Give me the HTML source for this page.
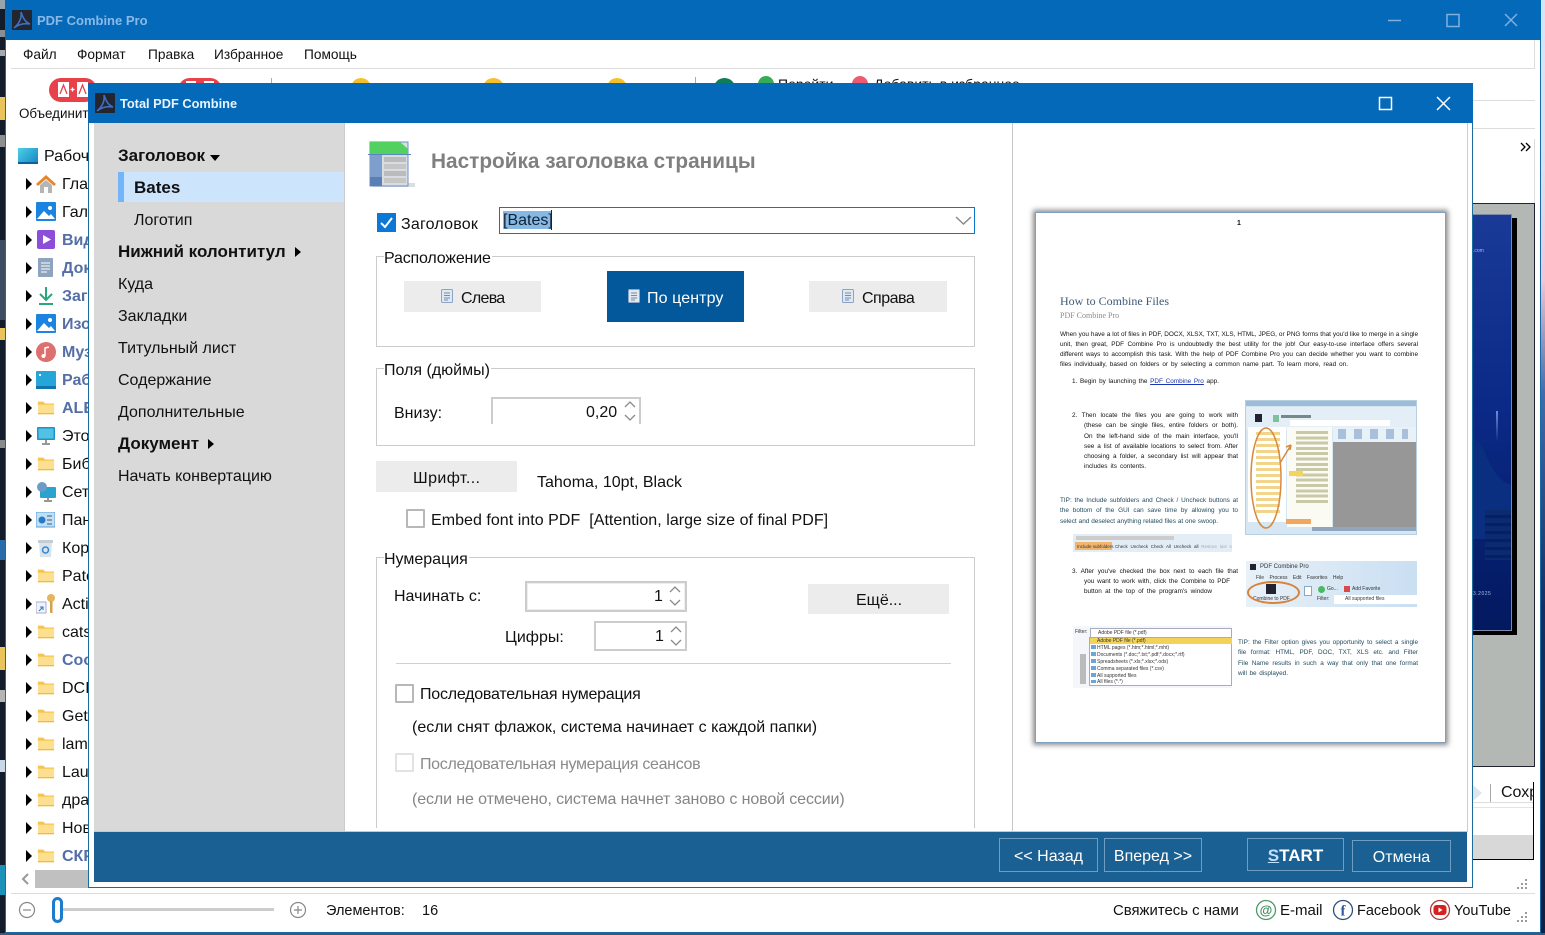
<!DOCTYPE html>
<html><head><meta charset="utf-8"><title>PDF Combine Pro</title>
<style>
html,body{margin:0;padding:0}
body{width:1545px;height:935px;overflow:hidden;position:relative;background:#fff;font-family:"Liberation Sans","DejaVu Sans",sans-serif;font-size:16px;color:#111}
.a{position:absolute;box-sizing:border-box}
.t{position:absolute;white-space:nowrap;line-height:20px;height:20px}
.b{font-weight:bold}
.g{position:absolute;box-sizing:border-box;border:1px solid #ccc}
.btn{position:absolute;background:#ececec;box-sizing:border-box}
.cb{position:absolute;box-sizing:border-box;width:19px;height:19px;border:2px solid #b8b8b8;background:#fff;border-radius:1px}
.fb{position:absolute;box-sizing:border-box;border:1px solid #6f9dc2;color:#fff;text-align:center}
.n{color:#556fa6;font-weight:bold}
.p{position:absolute;margin-top:1px;white-space:nowrap;font-size:6.4px;line-height:8px;height:8px;color:#111;text-align:justify;text-align-last:justify;overflow:hidden}
.s{position:absolute;white-space:nowrap;color:#333;line-height:7px;height:7px}
</style></head><body>
<svg width="0" height="0" style="position:absolute">
<symbol id="fo" viewBox="0 0 20 16"><path d="M1 1.500h6l2 2h10v12H1z" fill="#fde08f"/><path d="M1 1.500h6l2 2h10v1.500H1z" fill="#f5c552"/><path d="M1 14.300h18v1.200H1z" fill="#eab545"/></symbol>
<symbol id="ar" viewBox="0 0 8 12"><path d="M1 0l6 6-6 6z" fill="#000"/></symbol>
<symbol id="lg" viewBox="0 0 20 20"><rect width="20" height="20" rx="1" fill="#23262f"/><path d="M2 18C7 14 10 8 9 2c2 6 4 10 9 12C12 13 7 14 2 18z" fill="none" stroke="#3e6fc4" stroke-width="1.600"/></symbol>
<symbol id="dc" viewBox="0 0 12 14"><rect x=".5" y=".5" width="11" height="13" rx="1" fill="#dfe9f5" stroke="#8aa6c4"/><path d="M3 4h6M3 6.500h6M3 9h6M3 11h4" stroke="#7d8b9b"/></symbol>
</svg>

<!-- desktop edges -->
<div class="a" style="left:0;top:0;width:5px;height:935px;background:#131c2a"></div>
<div class="a" style="left:0;top:0;width:5px;height:9px;background:#9aa3ab"></div>
<div class="a" style="left:0;top:30px;width:5px;height:7px;background:#8a8f96"></div>
<div class="a" style="left:0;top:50px;width:5px;height:6px;background:#a5a8ac"></div>
<div class="a" style="left:0;top:97px;width:5px;height:23px;background:#eac35a"></div>
<div class="a" style="left:0;top:135px;width:5px;height:12px;background:#8f8f8f"></div>
<div class="a" style="left:0;top:240px;width:5px;height:80px;background:#3d4c60"></div>
<div class="a" style="left:0;top:328px;width:5px;height:12px;background:#eac35a"></div>
<div class="a" style="left:0;top:440px;width:5px;height:8px;background:#8a8a8a"></div>
<div class="a" style="left:0;top:540px;width:5px;height:20px;background:#2a6ca8"></div>
<div class="a" style="left:0;top:647px;width:5px;height:23px;background:#eac35a"></div>
<div class="a" style="left:0;top:690px;width:5px;height:12px;background:#b5b5b5"></div>
<div class="a" style="left:0;top:760px;width:5px;height:12px;background:#c9d8e8"></div>
<div class="a" style="left:0;top:865px;width:5px;height:30px;background:#1c92b8"></div>
<div class="a" style="left:1541px;top:0;width:4px;height:935px;background:linear-gradient(#d2e6f8 0,#dbe0f2 18%,#efc6d8 30%,#3f6ea8 42%,#12305f 65%,#0d2143 100%)"></div>
<div class="a" style="left:0;top:933px;width:1545px;height:2px;background:#3a5a78"></div>

<!-- main window -->
<div class="a" style="left:5px;top:0;width:1536px;height:933px;background:#fff;border:1px solid #1a6aa8;overflow:hidden"></div>
<div class="a" style="left:5px;top:0;width:1536px;height:40px;background:#0569b9"></div>
<svg class="a" style="left:12px;top:10px" width="20" height="20"><use href="#lg"/></svg>
<div class="t b" style="left:37px;top:11px;font-size:13px;color:#8ab9e6">PDF Combine Pro</div>
<svg class="a" style="left:1380px;top:10px" width="150" height="22" fill="none" stroke="#7fb0de" stroke-width="1.500"><path d="M8 10.500h13"/><rect x="67" y="4.500" width="12" height="12"/><path d="M125 4l12 12M137 4l-12 12"/></svg>

<div class="t" style="left:23px;top:45px;font-size:13.700px">Файл</div>
<div class="t" style="left:77px;top:45px;font-size:13.700px">Формат</div>
<div class="t" style="left:148px;top:45px;font-size:13.700px">Правка</div>
<div class="t" style="left:214px;top:45px;font-size:13.700px">Избранное</div>
<div class="t" style="left:304px;top:45px;font-size:13.700px">Помощь</div>
<div class="a" style="left:11px;top:68px;width:1524px;height:1px;background:#ddd"></div>
<div class="a" style="left:1534px;top:40px;width:1px;height:29px;background:#ddd"></div>

<!-- toolbar -->
<div class="a" style="left:49px;top:78px;width:48px;height:24px;border-radius:12px;background:#e8414a"></div>
<div class="a" style="left:58px;top:82px;width:11px;height:15px;background:#fff"></div>
<div class="a" style="left:77px;top:82px;width:11px;height:15px;background:#fff"></div>
<svg class="a" style="left:58px;top:82px" width="30" height="15" fill="none" stroke="#e8414a" stroke-width="1.300"><path d="M2 12L5.500 3 9 12M21 12l3.500-9 3.500 9"/><path d="M12.500 7.500h4M14.500 5.500v4" stroke="#fff"/></svg>
<div class="a" style="left:178px;top:78px;width:44px;height:24px;border-radius:12px;background:#e8414a"></div>
<div class="a" style="left:186px;top:81px;width:10px;height:3px;background:#fff"></div>
<div class="a" style="left:204px;top:81px;width:10px;height:3px;background:#fff"></div>
<div class="t" style="left:19px;top:104px;font-size:13.400px">Объединить</div>
<div class="a" style="left:271px;top:78px;width:1px;height:8px;background:#aaa"></div>
<div class="a" style="left:351px;top:78px;width:20px;height:20px;border-radius:50%;background:#f6c02c"></div>
<div class="a" style="left:483px;top:78px;width:21px;height:20px;border-radius:50%;background:#f6c02c"></div>
<div class="a" style="left:607px;top:78px;width:20px;height:20px;border-radius:50%;background:#f6c02c"></div>
<div class="a" style="left:695px;top:77px;width:1px;height:8px;background:#aaa"></div>
<div class="a" style="left:714px;top:78px;width:21px;height:20px;border-radius:50%;background:#0d7d56"></div>
<div class="a" style="left:758px;top:76px;width:16px;height:16px;border-radius:50%;background:#36ad55"></div>
<div class="t" style="left:778px;top:74px;font-size:14px">Перейти</div>
<div class="a" style="left:852px;top:76px;width:16px;height:16px;border-radius:50%;background:#ee5a70"></div>
<div class="t" style="left:874px;top:74px;font-size:14px">Добавить в избранное</div>

<!-- tree -->
<div class="a" style="left:18px;top:148px;width:20px;height:16px;background:linear-gradient(135deg,#4fd0e4,#1788c8);border-bottom:2px solid #0f5f98"></div>
<div class="t" style="left:44px;top:147px">Рабочий стол</div>

<svg class="a" style="left:25px;top:178px" width="8" height="692">
<use href="#ar" y="0" width="8" height="12"/><use href="#ar" y="28" width="8" height="12"/><use href="#ar" y="56" width="8" height="12"/><use href="#ar" y="84" width="8" height="12"/><use href="#ar" y="112" width="8" height="12"/><use href="#ar" y="140" width="8" height="12"/><use href="#ar" y="168" width="8" height="12"/><use href="#ar" y="196" width="8" height="12"/><use href="#ar" y="224" width="8" height="12"/><use href="#ar" y="252" width="8" height="12"/><use href="#ar" y="280" width="8" height="12"/><use href="#ar" y="308" width="8" height="12"/><use href="#ar" y="336" width="8" height="12"/><use href="#ar" y="364" width="8" height="12"/><use href="#ar" y="392" width="8" height="12"/><use href="#ar" y="420" width="8" height="12"/><use href="#ar" y="448" width="8" height="12"/><use href="#ar" y="476" width="8" height="12"/><use href="#ar" y="504" width="8" height="12"/><use href="#ar" y="532" width="8" height="12"/><use href="#ar" y="560" width="8" height="12"/><use href="#ar" y="588" width="8" height="12"/><use href="#ar" y="616" width="8" height="12"/><use href="#ar" y="644" width="8" height="12"/><use href="#ar" y="672" width="8" height="12"/>
</svg>
<!-- icons -->
<svg class="a" style="left:35px;top:174px" width="22" height="20"><path d="M11 1L1 10l2 2 8-7 8 7 2-2z" fill="#e8862e"/><path d="M5 11l6-5 6 5v8H5z" fill="#b5b5b5"/><rect x="9" y="13" width="4" height="6" fill="#fff"/></svg>
<svg class="a" style="left:36px;top:202px" width="20" height="20"><rect width="20" height="19" rx="1" fill="#1a84e0"/><path d="M1 17l7-8 5 5 2-2 4 5z" fill="#fff"/><circle cx="14" cy="6" r="2" fill="#fff"/></svg>
<svg class="a" style="left:37px;top:230px" width="18" height="19"><rect width="18" height="19" rx="2" fill="#8c4ed8"/><path d="M6 5l8 4.500-8 4.500z" fill="#fff"/></svg>
<svg class="a" style="left:38px;top:258px" width="15" height="19"><rect width="15" height="19" rx="1" fill="#8ea3bd"/><path d="M3 5h9M3 8h9M3 11h9M3 14h6" stroke="#fff"/></svg>
<svg class="a" style="left:38px;top:286px" width="16" height="20" fill="none" stroke="#2aa57c" stroke-width="2"><path d="M8 1v12M2 8l6 6 6-6M1 18h14"/></svg>
<svg class="a" style="left:36px;top:314px" width="20" height="20"><rect width="20" height="19" rx="1" fill="#1a84e0"/><path d="M1 17l7-8 5 5 2-2 4 5z" fill="#fff"/><circle cx="14" cy="6" r="2" fill="#fff"/></svg>
<svg class="a" style="left:36px;top:342px" width="20" height="20"><circle cx="10" cy="10" r="10" fill="#dd6f6f"/><path d="M9 14V6l4-1" stroke="#fff" stroke-width="1.500" fill="none"/><circle cx="7.500" cy="14" r="2" fill="#fff"/></svg>
<svg class="a" style="left:36px;top:371px" width="20" height="18"><rect width="20" height="18" rx="1" fill="#25a5d8"/><rect y="15" width="20" height="3" fill="#0f74ad"/><rect x="3" y="3" width="2" height="2" fill="#fff"/></svg>
<svg class="a" style="left:37px;top:400px" width="18" height="15"><use href="#fo"/></svg>
<svg class="a" style="left:37px;top:427px" width="18" height="18"><rect width="18" height="13" rx="1" fill="#1d94c8"/><rect x="1.500" y="1.500" width="15" height="10" fill="#53c1e4"/><path d="M9 13v3M5 17h8" stroke="#777" stroke-width="1.500"/></svg>
<svg class="a" style="left:37px;top:456px" width="18" height="15"><use href="#fo"/></svg>
<svg class="a" style="left:36px;top:482px" width="20" height="20"><rect x="4" y="5" width="16" height="11" rx="1" fill="#2aa3cf"/><circle cx="6" cy="5" r="5" fill="#6c9bc8"/><path d="M12 16v2M8 19h8" stroke="#777" stroke-width="1.500"/></svg>
<svg class="a" style="left:36px;top:512px" width="19" height="16"><rect width="19" height="15" fill="#bfe0f6" stroke="#5aa0d8"/><circle cx="6" cy="8" r="3.500" fill="#2a78c8"/><path d="M11 4h5M11 8h5M11 12h5" stroke="#555"/></svg>
<svg class="a" style="left:38px;top:539px" width="15" height="18"><path d="M1 3h13l-1 15H2z" fill="#dbe3ea"/><rect y="1" width="15" height="3" fill="#c5ccd4"/><circle cx="7.500" cy="11" r="3" fill="none" stroke="#2a8ad8" stroke-width="1.500"/></svg>
<svg class="a" style="left:37px;top:568px" width="18" height="15"><use href="#fo"/></svg>
<svg class="a" style="left:36px;top:593px" width="20" height="21"><rect y="9" width="10" height="11" fill="#f0f4fa" stroke="#aac"/><path d="M3 18l4-4M4 14h3v3" stroke="#1a7ad8" fill="none"/><circle cx="15" cy="5" r="4" fill="#e3b65e"/><rect x="14" y="8" width="2.500" height="12" fill="#d2a24e"/></svg>
<svg class="a" style="left:37px;top:624px" width="18" height="15"><use href="#fo"/></svg>
<svg class="a" style="left:37px;top:652px" width="18" height="15"><use href="#fo"/></svg>
<svg class="a" style="left:37px;top:680px" width="18" height="15"><use href="#fo"/></svg>
<svg class="a" style="left:37px;top:708px" width="18" height="15"><use href="#fo"/></svg>
<svg class="a" style="left:37px;top:736px" width="18" height="15"><use href="#fo"/></svg>
<svg class="a" style="left:37px;top:764px" width="18" height="15"><use href="#fo"/></svg>
<svg class="a" style="left:37px;top:792px" width="18" height="15"><use href="#fo"/></svg>
<svg class="a" style="left:37px;top:820px" width="18" height="15"><use href="#fo"/></svg>
<svg class="a" style="left:37px;top:848px" width="18" height="15"><use href="#fo"/></svg>
<!-- labels -->
<div class="t" style="left:62px;top:175px">Главная</div>
<div class="t" style="left:62px;top:203px">Галерея</div>
<div class="t n" style="left:62px;top:231px">Видео</div>
<div class="t n" style="left:62px;top:259px">Документы</div>
<div class="t n" style="left:62px;top:287px">Загрузки</div>
<div class="t n" style="left:62px;top:315px">Изображения</div>
<div class="t n" style="left:62px;top:343px">Музыка</div>
<div class="t n" style="left:62px;top:371px">Рабочий стол</div>
<div class="t n" style="left:62px;top:399px">ALEX</div>
<div class="t" style="left:62px;top:427px">Этот компьютер</div>
<div class="t" style="left:62px;top:455px">Библиотеки</div>
<div class="t" style="left:62px;top:483px">Сеть</div>
<div class="t" style="left:62px;top:511px">Панель</div>
<div class="t" style="left:62px;top:539px">Корзина</div>
<div class="t" style="left:62px;top:567px">Patch</div>
<div class="t" style="left:62px;top:595px">Activate</div>
<div class="t" style="left:62px;top:623px">cats</div>
<div class="t n" style="left:62px;top:651px">Cool</div>
<div class="t" style="left:62px;top:679px">DCIM</div>
<div class="t" style="left:62px;top:707px">GetW</div>
<div class="t" style="left:62px;top:735px">lam</div>
<div class="t" style="left:62px;top:763px">Lau</div>
<div class="t" style="left:62px;top:791px">драйв</div>
<div class="t" style="left:62px;top:819px">Новая</div>
<div class="t n" style="left:62px;top:847px">СКР</div>
<svg class="a" style="left:20px;top:872px" width="10" height="14" fill="none" stroke="#999" stroke-width="2"><path d="M8 2L3 7l5 5"/></svg>
<div class="a" style="left:35px;top:870px;width:128px;height:18px;background:#c0c0c0"></div>

<!-- right side of main window -->
<div class="a" style="left:1473px;top:100px;width:62px;height:1px;background:#ddd"></div>
<div class="a" style="left:1473px;top:128px;width:62px;height:1px;background:#ddd"></div>
<div class="a" style="left:1534px;top:139px;width:1px;height:64px;background:#ddd"></div>
<svg class="a" style="left:1520px;top:142px" width="12" height="10" fill="none" stroke="#000" stroke-width="1.300"><path d="M1 1l4 4-4 4M6 1l4 4-4 4"/></svg>
<div class="a" style="left:1473px;top:203px;width:62px;height:564px;background:#b3b8b5;border-top:1px solid #223;border-bottom:1px solid #223;border-right:1px solid #223"></div>
<div class="a" style="left:1473px;top:218px;width:44px;height:417px;background:#000"></div>
<div class="a" style="left:1473px;top:214px;width:39px;height:417px;background:linear-gradient(#1a3a98 0,#0b2a88 45%,#03195f 100%);border:1px solid #7e8aa8;border-left:0;overflow:hidden">
  <svg class="a" style="left:0;top:224px" width="38" height="100"><path d="M0 0C14 2 14 38 38 46V100H0z" fill="#0a2f80"/></svg>
  <div class="a" style="left:12px;top:295px;width:26px;height:50px;background:repeating-linear-gradient(#0c2a6e 0,#0c2a6e 5px,#05206a 5px,#05206a 8px)"></div>
  <div class="a" style="left:23px;top:196px;width:2px;height:30px;background:linear-gradient(#6a8ee0,#0c2a80)"></div>
</div>
<div class="t" style="left:1473px;top:241px;font-size:5px;color:#a9b8e0">.com</div>
<div class="t" style="left:1473px;top:584px;font-size:5px;color:#a9b8e0;letter-spacing:.5px">3.2025</div>
<div class="a" style="left:1473px;top:802px;width:60px;height:1px;background:#ddd"></div>
<div class="a" style="left:1490px;top:784px;width:1px;height:18px;background:#aaa"></div>
<svg class="a" style="left:1473px;top:784px" width="10" height="18"><path d="M0 1l9 8-9 8z" fill="#dde6ee"/></svg>
<div class="t" style="left:1501px;top:783px;width:32px;overflow:hidden">Сохранить</div>
<div class="a" style="left:1473px;top:807px;width:60px;height:1px;background:#e4e4e4"></div>
<div class="a" style="left:1473px;top:835px;width:60px;height:24px;background:#d8d8d8"></div>
<div class="a" style="left:1533px;top:782px;width:1px;height:78px;background:#000"></div>
<div class="a" style="left:1473px;top:859px;width:61px;height:1px;background:#000"></div>
<svg class="a" style="left:1517px;top:879px" width="12" height="12" fill="#9a9a9a"><rect x="8" y="0" width="2" height="2"/><rect x="4" y="4" width="2" height="2"/><rect x="8" y="4" width="2" height="2"/><rect x="0" y="8" width="2" height="2"/><rect x="4" y="8" width="2" height="2"/><rect x="8" y="8" width="2" height="2"/></svg>

<!-- status bar -->
<div class="a" style="left:11px;top:893px;width:1524px;height:1px;background:#ddd"></div>
<svg class="a" style="left:18px;top:901px" width="18" height="18" fill="none" stroke="#888" stroke-width="1.200"><circle cx="9" cy="9" r="7.500"/><path d="M5 9h8"/></svg>
<div class="a" style="left:63px;top:908px;width:211px;height:3px;background:#ccc"></div>
<div class="a" style="left:52px;top:897px;width:11px;height:26px;border:3px solid #1f7ccb;border-radius:6px;background:#fff"></div>
<svg class="a" style="left:289px;top:901px" width="18" height="18" fill="none" stroke="#888" stroke-width="1.200"><circle cx="9" cy="9" r="7.500"/><path d="M5 9h8M9 5v8"/></svg>
<div class="t" style="left:326px;top:901px;font-size:14.500px">Элементов:</div>
<div class="t" style="left:422px;top:901px;font-size:14.500px">16</div>
<div class="t" style="left:1113px;top:901px;font-size:14.900px">Свяжитесь с нами</div>
<svg class="a" style="left:1255px;top:899px" width="22" height="22"><circle cx="11" cy="11" r="9.500" fill="none" stroke="#4b9a68" stroke-width="1.300"/><text x="11" y="15.500" font-size="13" font-weight="bold" text-anchor="middle" fill="#3b8f5c" font-family="Liberation Sans">@</text></svg>
<div class="t" style="left:1280px;top:901px;font-size:15px">E-mail</div>
<svg class="a" style="left:1332px;top:899px" width="22" height="22"><circle cx="11" cy="11" r="9.500" fill="none" stroke="#2f4d7d" stroke-width="1.300"/><text x="11" y="16.500" font-size="15" font-weight="bold" text-anchor="middle" fill="#2f5aa0" font-family="Liberation Serif">f</text></svg>
<div class="t" style="left:1357px;top:901px;font-size:14.500px">Facebook</div>
<svg class="a" style="left:1429px;top:899px" width="22" height="22"><circle cx="11" cy="11" r="9.500" fill="none" stroke="#a83a3a" stroke-width="1.300"/><rect x="4.500" y="6" width="13" height="10" rx="3" fill="#d8201f"/><path d="M9.500 8.500l4 2.500-4 2.500z" fill="#fff"/></svg>
<div class="t" style="left:1454px;top:901px;font-size:14.500px">YouTube</div>
<svg class="a" style="left:1517px;top:912px" width="12" height="12" fill="#9a9a9a"><rect x="8" y="0" width="2" height="2"/><rect x="4" y="4" width="2" height="2"/><rect x="8" y="4" width="2" height="2"/><rect x="0" y="8" width="2" height="2"/><rect x="4" y="8" width="2" height="2"/><rect x="8" y="8" width="2" height="2"/></svg>

<!-- dialog -->
<div class="a" style="left:88px;top:83px;width:1385px;height:805px;background:#fff;border:1px solid #1a6c9c"></div>
<div class="a" style="left:88px;top:83px;width:1385px;height:40px;background:#0569b9"></div>
<svg class="a" style="left:95px;top:93px" width="20" height="20"><use href="#lg"/></svg>
<div class="t b" style="left:120px;top:94px;font-size:12.800px;color:#eaf3fb">Total PDF Combine</div>
<svg class="a" style="left:1375px;top:93px" width="80" height="20" fill="none" stroke="#fff" stroke-width="1.500"><rect x="4.500" y="4.500" width="12" height="12"/><path d="M62 4l13 13M75 4L62 17"/></svg>

<!-- nav -->
<div class="a" style="left:94px;top:123px;width:251px;height:709px;background:#d9d9d9;border-right:1px solid #ccc"></div>
<div class="t b" style="left:118px;top:146px;font-size:17px">Заголовок</div>
<svg class="a" style="left:210px;top:155px" width="10" height="6"><path d="M0 0h10L5 6z" fill="#000"/></svg>
<div class="a" style="left:118px;top:172px;width:226px;height:30px;background:#cce4fc;border-left:6px solid #74b4f8"></div>
<div class="t b" style="left:134px;top:178px;font-size:17px">Bates</div>
<div class="t" style="left:134px;top:211px">Логотип</div>
<div class="t b" style="left:118px;top:242px;font-size:17px">Нижний колонтитул</div>
<svg class="a" style="left:295px;top:247px" width="6" height="10"><path d="M0 0l6 5-6 5z" fill="#000"/></svg>
<div class="t" style="left:118px;top:275px">Куда</div>
<div class="t" style="left:118px;top:307px">Закладки</div>
<div class="t" style="left:118px;top:339px">Титульный лист</div>
<div class="t" style="left:118px;top:371px">Содержание</div>
<div class="t" style="left:118px;top:403px">Дополнительные</div>
<div class="t b" style="left:118px;top:434px;font-size:17px">Документ</div>
<svg class="a" style="left:208px;top:439px" width="6" height="10"><path d="M0 0l6 5-6 5z" fill="#000"/></svg>
<div class="t" style="left:118px;top:467px">Начать конвертацию</div>

<!-- heading -->
<svg class="a" style="left:367px;top:139px" width="50" height="49"><rect x="6" y="44" width="42" height="4" fill="#ddd"/><rect x="3" y="3" width="38" height="44" fill="#d8dde2" stroke="#6c8fc4"/><path d="M3 3h30l8 7v5H3z" fill="#52d060"/><path d="M1 15.500h43" stroke="#5b84c0"/><rect x="3" y="16" width="12" height="31" fill="#7e9fcc"/><rect x="3" y="38" width="12" height="9" fill="#5a7fb5"/><rect x="17" y="18" width="22" height="5" fill="#bbb"/><rect x="17" y="25" width="22" height="5" fill="#c6c6c6"/><rect x="17" y="32" width="22" height="5" fill="#bbb"/><rect x="17" y="39" width="22" height="5" fill="#c6c6c6"/></svg>
<div class="t b" style="left:431px;top:152px;font-size:20.800px;color:#7f7f7f">Настройка заголовка страницы</div>

<!-- header row -->
<div class="a" style="left:377px;top:213px;width:19px;height:19px;background:#0a78d4"></div>
<svg class="a" style="left:377px;top:213px" width="19" height="19" fill="none" stroke="#fff" stroke-width="2"><path d="M4 10l4 4 7-9"/></svg>
<div class="t" style="left:401px;top:215px;letter-spacing:.2px">Заголовок</div>
<div class="a" style="left:499px;top:207px;width:476px;height:27px;border:1px solid #0a78c8;background:#fff"></div>
<div class="a" style="left:503px;top:211px;width:48px;height:18px;background:#86b8e4"></div>
<div class="a" style="left:551px;top:210px;width:1px;height:20px;background:#222"></div>
<div class="t" style="left:503px;top:211px;color:#123">[Bates]</div>
<svg class="a" style="left:955px;top:216px" width="17" height="10" fill="none" stroke="#8a8a8a" stroke-width="1.500"><path d="M1 1l7.500 7L16 1"/></svg>

<!-- расположение -->
<div class="g" style="left:376px;top:256px;width:599px;height:91px"></div>
<div class="t" style="left:384px;top:249px;background:#fff;padding-right:1px;letter-spacing:-.17px">Расположение</div>
<div class="btn" style="left:404px;top:281px;width:137px;height:31px"></div>
<svg class="a" style="left:441px;top:289px" width="12" height="14"><use href="#dc"/></svg>
<div class="t" style="left:461px;top:289px;letter-spacing:-.7px">Слева</div>
<div class="a" style="left:607px;top:271px;width:137px;height:51px;background:#02589b"></div>
<svg class="a" style="left:628px;top:289px" width="12" height="14"><use href="#dc"/></svg>
<div class="t" style="left:647px;top:289px;color:#fff;letter-spacing:.1px">По центру</div>
<div class="btn" style="left:809px;top:281px;width:138px;height:31px"></div>
<svg class="a" style="left:842px;top:289px" width="12" height="14"><use href="#dc"/></svg>
<div class="t" style="left:862px;top:289px;letter-spacing:-.5px">Справа</div>

<!-- поля -->
<div class="g" style="left:376px;top:368px;width:599px;height:78px"></div>
<div class="t" style="left:384px;top:361px;background:#fff;padding-right:1px">Поля (дюймы)</div>
<div class="t" style="left:394px;top:404px">Внизу:</div>
<div class="a" style="left:491px;top:397px;width:150px;height:27px;border:2px solid #ccc;border-bottom:0"></div>
<div class="t" style="left:586px;top:403px">0,20</div>
<svg class="a" style="left:623px;top:400px" width="14" height="22" fill="none" stroke="#8a8a8a" stroke-width="1.300"><path d="M2 7l5-5 5 5M2 15l5 5 5-5"/></svg>

<!-- шрифт -->
<div class="btn" style="left:376px;top:461px;width:141px;height:31px"></div>
<div class="t" style="left:413px;top:469px;letter-spacing:.4px">Шрифт...</div>
<div class="t" style="left:537px;top:473px">Tahoma, 10pt, Black</div>
<div class="cb" style="left:406px;top:509px"></div>
<div class="t" style="left:431px;top:511px;letter-spacing:.04px">Embed font into PDF&nbsp; [Attention, large size of final PDF]</div>

<!-- нумерация -->
<div class="a" style="left:376px;top:557px;width:599px;height:271px;border:1px solid #ccc;border-bottom:0"></div>
<div class="t" style="left:384px;top:550px;background:#fff;padding-right:1px">Нумерация</div>
<div class="t" style="left:394px;top:587px">Начинать с:</div>
<div class="a" style="left:525px;top:581px;width:162px;height:31px;border:2px solid #ccc;box-shadow:inset 0 0 0 1px #eee"></div>
<div class="t" style="left:654px;top:587px">1</div>
<svg class="a" style="left:668px;top:585px" width="14" height="22" fill="none" stroke="#8a8a8a" stroke-width="1.300"><path d="M2 7l5-5 5 5M2 15l5 5 5-5"/></svg>
<div class="btn" style="left:808px;top:584px;width:141px;height:30px"></div>
<div class="t" style="left:856px;top:591px">Ещё...</div>
<div class="t" style="left:505px;top:628px">Цифры:</div>
<div class="a" style="left:594px;top:621px;width:93px;height:30px;border:2px solid #ccc"></div>
<div class="t" style="left:655px;top:627px">1</div>
<svg class="a" style="left:669px;top:625px" width="14" height="22" fill="none" stroke="#8a8a8a" stroke-width="1.300"><path d="M2 7l5-5 5 5M2 15l5 5 5-5"/></svg>
<div class="a" style="left:396px;top:663px;width:555px;height:1px;background:#d0d0d0"></div>
<div class="cb" style="left:395px;top:684px"></div>
<div class="t" style="left:420px;top:685px;letter-spacing:-.23px">Последовательная нумерация</div>
<div class="t" style="left:412px;top:718px">(если снят флажок, система начинает с каждой папки)</div>
<div class="cb" style="left:395px;top:753px;border-color:#e2e2e2"></div>
<div class="t" style="left:420px;top:755px;color:#8a8a8a;letter-spacing:-.32px">Последовательная нумерация сеансов</div>
<div class="t" style="left:412px;top:790px;color:#858585;letter-spacing:-.11px">(если не отмечено, система начнет заново с новой сессии)</div>

<!-- preview -->
<div class="a" style="left:1012px;top:123px;width:1px;height:709px;background:#c8c8c8"></div>
<div class="a" style="left:1467px;top:123px;width:1px;height:709px;background:#ccc"></div>
<div class="a" style="left:1035px;top:212px;width:411px;height:531px;background:#fff;border:1px solid #7f9fc0;box-shadow:0 0 5px 2px #8a8a8a"></div>
<div class="t" style="left:1237px;top:218px;font-size:7px;line-height:12px;height:12px;font-weight:bold">1</div>
<div class="t" style="left:1060px;top:291px;font-family:'Liberation Serif',serif;font-size:12px;color:#3c5a78">How to Combine Files</div>
<div class="t" style="left:1060px;top:306px;font-family:'Liberation Serif',serif;font-size:8px;color:#8a8a8a">PDF Combine Pro</div>
<div class="p" style="left:1060px;top:330px;width:358px">When you have a lot of files in PDF, DOCX, XLSX, TXT, XLS, HTML, JPEG, or PNG forms that you'd like to merge in a single</div>
<div class="p" style="left:1060px;top:340px;width:358px">unit, then great, PDF Combine Pro is undoubtedly the best utility for the job! Our easy-to-use interface offers several</div>
<div class="p" style="left:1060px;top:350px;width:358px">different ways to accomplish this task. With the help of PDF Combine Pro you can decide whether you want to combine</div>
<div class="p" style="left:1060px;top:360px;width:288px">files individually, based on folders or by selecting a common name part. To learn more, read on.</div>
<div class="p" style="left:1072px;top:377px;width:147px">1. Begin by launching the <span style="color:#1a33b0;text-decoration:underline">PDF Combine Pro</span> app.</div>
<div class="p" style="left:1072px;top:411px;width:166px">2. Then locate the files you are going to work with</div>
<div class="p" style="left:1084px;top:421px;width:154px">(these can be single files, entire folders or both).</div>
<div class="p" style="left:1084px;top:432px;width:154px">On the left-hand side of the main interface, you'll</div>
<div class="p" style="left:1084px;top:442px;width:154px">see a list of available locations to select from. After</div>
<div class="p" style="left:1084px;top:452px;width:154px">choosing a folder, a secondary list will appear that</div>
<div class="p" style="left:1084px;top:462px;width:62px">includes its contents.</div>
<div class="p" style="left:1060px;top:496px;width:178px;color:#1f4a5c">TIP: the Include subfolders and Check / Uncheck buttons at</div>
<div class="p" style="left:1060px;top:506px;width:178px;color:#1f4a5c">the bottom of the GUI can save time by allowing you to</div>
<div class="p" style="left:1060px;top:517px;width:158px;color:#1f4a5c">select and deselect anything related files at one swoop.</div>
<div class="p" style="left:1072px;top:567px;width:166px">3. After you've checked the box next to each file that</div>
<div class="p" style="left:1084px;top:577px;width:146px">you want to work with, click the Combine to PDF</div>
<div class="p" style="left:1084px;top:587px;width:128px">button at the top of the program's window</div>
<div class="p" style="left:1238px;top:638px;width:180px;color:#1f4a5c">TIP: the Filter option gives you opportunity to select a single</div>
<div class="p" style="left:1238px;top:648px;width:180px;color:#1f4a5c">file format: HTML, PDF, DOC, TXT, XLS etc. and Filter</div>
<div class="p" style="left:1238px;top:659px;width:180px;color:#1f4a5c">File Name results in such a way that only that one format</div>
<div class="p" style="left:1238px;top:669px;width:50px;color:#1f4a5c">will be displayed.</div>

<!-- preview image 1 -->
<div class="a" style="left:1245px;top:400px;width:172px;height:135px;background:#d7e6f3;overflow:hidden;border:1px solid #b8cfe2">
  <div class="a" style="left:0;top:0;width:172px;height:5px;background:#9dbcd9"></div>
  <div class="a" style="left:0;top:6px;width:172px;height:23px;background:#e3eef7"></div>
  <div class="a" style="left:9px;top:13px;width:7px;height:8px;background:#223"></div>
  <div class="a" style="left:27px;top:14px;width:6px;height:7px;background:#7fc0a0"></div>
  <div class="a" style="left:35px;top:14px;width:30px;height:3px;background:#788"></div>
  <div class="a" style="left:44px;top:19px;width:100px;height:6px;background:#fff"></div>
  <div class="a" style="left:2px;top:26px;width:38px;height:95px;background:#fff"></div>
  <div class="a" style="left:10px;top:31px;width:24px;height:84px;background:repeating-linear-gradient(#f2d58a 0,#f2d58a 3px,#fff 3px,#fff 6px)"></div>
  <div class="a" style="left:41px;top:26px;width:45px;height:100px;background:#fbfbf4"></div>
  <div class="a" style="left:50px;top:30px;width:32px;height:72px;background:repeating-linear-gradient(#c9c9a8 0,#c9c9a8 3px,#fbfbf4 3px,#fbfbf4 5.300px)"></div>
  <div class="a" style="left:43px;top:70px;width:14px;height:5px;background:#f6d458"></div>
  <div class="a" style="left:87px;top:26px;width:84px;height:16px;background:#e8f0f8"></div>
  <div class="a" style="left:92px;top:28px;width:70px;height:10px;background:repeating-linear-gradient(90deg,#a8c0da 0,#a8c0da 8px,#e8f0f8 8px,#e8f0f8 16px)"></div>
  <div class="a" style="left:87px;top:41px;width:84px;height:85px;background:#979797"></div>
  <div class="a" style="left:40px;top:118px;width:25px;height:5px;background:#f0a860"></div>
  <div class="a" style="left:66px;top:126px;width:105px;height:4px;background:#8fa6bc"></div>
  <svg class="a" style="left:0;top:0" width="172" height="135" fill="none"><ellipse cx="20" cy="77" rx="15" ry="50" stroke="#d68a3e" stroke-width="1.500"/><path d="M34 62l11-18M45 44l-5 2M45 44l-1 5" stroke="#d68a3e" stroke-width="1.500"/></svg>
</div>
<!-- strip -->
<div class="a" style="left:1073px;top:534px;width:159px;height:18px;background:#e2edf6;overflow:hidden">
  <div class="a" style="left:3px;top:2px;width:98px;height:4px;background:#ccc"></div>
  <div class="a" style="left:2px;top:8px;width:37px;height:8px;background:#f2b56d"></div>
  <div class="s" style="left:4px;top:9px;font-size:4.500px">Include subfolders</div>
  <div class="s" style="left:42px;top:9px;font-size:4.500px;word-spacing:1.500px">Check Uncheck Check All Uncheck all <span style="color:#aab">Restore last selection</span></div>
</div>
<!-- image 2 -->
<div class="a" style="left:1246px;top:561px;width:171px;height:46px;background:linear-gradient(90deg,#e8f1f8,#c9dff2);overflow:hidden">
  <div class="a" style="left:4px;top:3px;width:6px;height:6px;background:#223"></div>
  <div class="s" style="left:14px;top:3px;font-size:6px">PDF Combine Pro</div>
  <div class="s" style="left:10px;top:14px;font-size:5px;word-spacing:4px">File Process Edit Favorites Help</div>
  <div class="a" style="left:20px;top:23px;width:10px;height:10px;background:#223"></div>
  <div class="a" style="left:58px;top:25px;width:8px;height:10px;background:#fff;border:1px solid #8ab"></div>
  <div class="a" style="left:72px;top:25px;width:7px;height:7px;border-radius:50%;background:#4cb860"></div>
  <div class="s" style="left:81px;top:25px;font-size:5px">Go...</div>
  <div class="a" style="left:98px;top:25px;width:6px;height:6px;background:#d84a4a"></div>
  <div class="s" style="left:106px;top:25px;font-size:5px">Add Favorite</div>
  <div class="a" style="left:88px;top:34px;width:83px;height:9px;background:#fff"></div>
  <div class="s" style="left:71px;top:35px;font-size:5px">Filter:</div>
  <div class="s" style="left:99px;top:35px;font-size:5px">All supported files</div>
  <div class="s" style="left:7px;top:35px;font-size:5px">Combine to PDF</div>
  <div class="a" style="left:1px;top:20px;width:53px;height:23px;border:2px solid #d8823a;border-radius:50%"></div>
</div>
<!-- image 3 -->
<div class="a" style="left:1073px;top:626px;width:159px;height:62px;background:#f3f7fb;overflow:hidden">
  <div class="s" style="left:2px;top:3px;font-size:5px">Filter:</div>
  <div class="a" style="left:17px;top:2px;width:142px;height:10px;background:#fff;border:1px solid #aab"></div>
  <div class="s" style="left:25px;top:4px;font-size:5px">Adobe PDF file (*.pdf)</div>
  <div class="a" style="left:16px;top:11px;width:143px;height:49px;background:#fff;border:1px solid #aab"></div>
  <div class="a" style="left:17px;top:12px;width:142px;height:6px;background:#f3d258"></div>
  <div class="s" style="left:24px;top:12px;font-size:5px">Adobe PDF file (*.pdf)</div>
  <div class="s" style="left:24px;top:19px;font-size:5px">HTML pages (*.htm;*.html;*.mht)</div>
  <div class="s" style="left:24px;top:26px;font-size:5px">Documents (*.doc;*.txt;*.pdf;*.docx;*.rtf)</div>
  <div class="s" style="left:24px;top:33px;font-size:5px">Spreadsheets (*.xls;*.xlsx;*.ods)</div>
  <div class="s" style="left:24px;top:40px;font-size:5px">Comma separated files (*.csv)</div>
  <div class="s" style="left:24px;top:47px;font-size:5px">All supported files</div>
  <div class="s" style="left:24px;top:53px;font-size:5px">All files (*.*)</div>
  <div class="a" style="left:18px;top:19px;width:5px;height:38px;background:repeating-linear-gradient(#6aa6d8 0,#6aa6d8 4px,#fff 4px,#fff 7px)"></div>
  <div class="a" style="left:7px;top:28px;width:6px;height:30px;background:#bbb"></div>
</div>

<!-- footer -->
<div class="a" style="left:94px;top:831px;width:1373px;height:1px;background:#c8c8c8"></div>
<div class="a" style="left:94px;top:832px;width:1373px;height:50px;background:#1b6093"></div>
<div class="fb" style="left:999px;top:838px;width:99px;height:34px;line-height:35px">&lt;&lt; Назад</div>
<div class="fb" style="left:1104px;top:838px;width:98px;height:34px;line-height:35px">Вперед &gt;&gt;</div>
<div class="fb b" style="left:1247px;top:838px;width:97px;height:33px;line-height:33px;font-size:17px"><span style="text-decoration:underline;color:#bfe0ff">S</span>TART</div>
<div class="fb" style="left:1352px;top:840px;width:99px;height:32px;line-height:33px">Отмена</div>
</body></html>
